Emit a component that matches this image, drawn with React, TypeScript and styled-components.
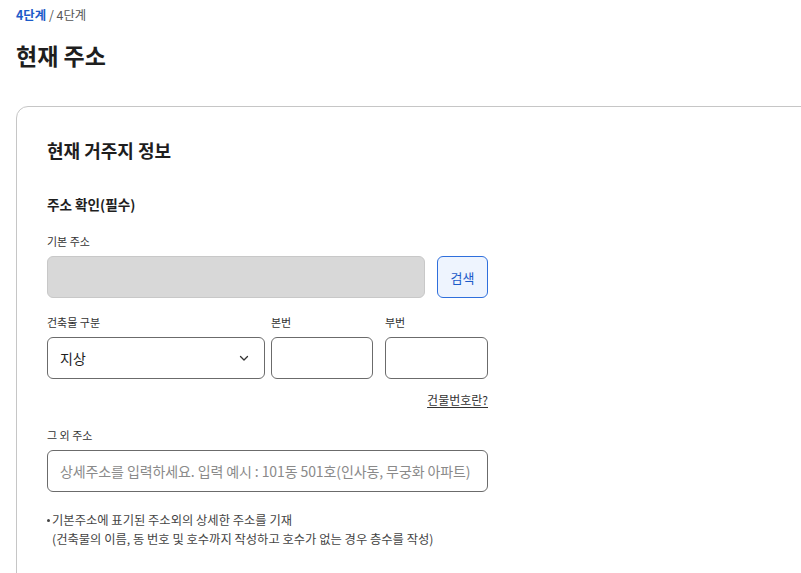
import styled, { createGlobalStyle } from "styled-components";

const GlobalStyle = createGlobalStyle`
	html, body {
		margin: 0;
		padding: 0;
		background: #fff;
		overflow: hidden;
	}
	body {
		font-family: "Noto Sans CJK KR", "Noto Sans", sans-serif;
		color: #1e1e1e;
	}
	* {
		box-sizing: border-box;
	}
`;

const Page = styled.div`
	padding: 6px 16px 0;
	width: 801px;
	overflow: hidden;
`;

const Breadcrumb = styled.nav`
	font-size: 12.4px;
	line-height: 18px;
	color: #555;
`;

const Current = styled.a`
	color: #1c5bc9;
	font-weight: 700;
	text-decoration: none;
`;

const PageTitle = styled.h1`
	margin: 15px 0 0;
	font-size: 23px;
	line-height: 32px;
	font-weight: 700;
	color: #1e1e1e;
`;

const Card = styled.section`
	margin-top: 35px;
	width: 830px;
	min-height: 480px;
	border: 1px solid #c6c6c6;
	border-radius: 12px;
	padding: 29px 30px 0;
`;

const Form = styled.div`
	width: 441px;
	display: flex;
	flex-direction: column;
`;

const CardTitle = styled.h2`
	margin: 0;
	font-size: 18px;
	line-height: 28px;
	font-weight: 700;
`;

const SectionTitle = styled.h3`
	margin: 30px 0 0;
	font-size: 13.6px;
	line-height: 20px;
	font-weight: 700;
`;

const Label = styled.label`
	display: block;
	font-size: 11px;
	line-height: 16px;
	color: #333;
	margin-bottom: 7px;
`;

const Field = styled.div<{ $width?: number; $inset?: number }>`
	display: flex;
	flex-direction: column;
	flex: ${(p) => (p.$width ? `0 0 ${p.$width}px` : "1 1 0")};
	padding-left: ${(p) => p.$inset ?? 0}px;
	min-width: 0;
`;

const Row = styled.div<{ $gap?: number }>`
	display: flex;
	align-items: flex-end;
	gap: ${(p) => p.$gap ?? 12}px;
`;

const Block = styled.div<{ $top: number }>`
	margin-top: ${(p) => p.$top}px;
`;

const Input = styled.input<{ $disabled?: boolean }>`
	width: 100%;
	height: 42px;
	border: 1px solid ${(p) => (p.$disabled ? "#c8c8c8" : "#6b6b6b")};
	border-radius: 6px;
	background: ${(p) => (p.$disabled ? "#d8d8d8" : "#fff")};
	padding: 0 12px;
	font-family: inherit;
	font-size: 14px;
	letter-spacing: -0.1px;
	color: #1e1e1e;
	outline: none;

	&::placeholder {
		color: #8a8a8a;
	}
`;

const SearchButton = styled.button`
	flex: 0 0 51px;
	height: 42px;
	border: 1px solid #2f6fdc;
	border-radius: 6px;
	background: #eef4fe;
	color: #1c5bc9;
	font-family: inherit;
	font-size: 13px;
	padding: 0;
	cursor: pointer;
`;

const Select = styled.div`
	height: 42px;
	border: 1px solid #6b6b6b;
	border-radius: 6px;
	display: flex;
	align-items: center;
	justify-content: space-between;
	padding: 0 14px 0 12px;
	font-size: 14px;
	color: #1e1e1e;
`;

const HelpLink = styled.a`
	align-self: flex-end;
	margin-top: 12px;
	font-size: 12px;
	line-height: 18px;
	color: #333;
	text-decoration: underline;
	text-underline-offset: 2px;
`;

const Notes = styled.ul`
	list-style: none;
	margin: 19px 0 0;
	padding: 0;
	font-size: 12.3px;
	line-height: 19px;
	color: #444;
`;

const Note = styled.li`
	position: relative;
	padding-left: 5px;

	&::before {
		content: "";
		position: absolute;
		left: 0;
		top: 8px;
		width: 3px;
		height: 3px;
		border-radius: 50%;
		background: #444;
	}
`;

function Chevron() {
	return (
		<svg width="12" height="12" viewBox="0 0 12 12" fill="none">
			<path d="M2.5 4.5 6 8l3.5-3.5" stroke="#333" strokeWidth="1.3" strokeLinecap="round" strokeLinejoin="round" />
		</svg>
	);
}

function App() {
	return (
		<>
			<GlobalStyle />
			<Page>
				<Breadcrumb>
					<Current href="#">4단계</Current> / 4단계
				</Breadcrumb>
				<PageTitle>현재 주소</PageTitle>

				<Card>
					<CardTitle>현재 거주지 정보</CardTitle>
					<Form>
						<SectionTitle>주소 확인(필수)</SectionTitle>

						<Block $top={19}>
							<Label>기본 주소</Label>
							<Row>
								<Field>
									<Input $disabled disabled />
								</Field>
								<SearchButton>검색</SearchButton>
							</Row>
						</Block>

						<Block $top={16}>
							<Row $gap={0}>
								<Field $width={218}>
									<Label>건축물 구분</Label>
									<Select>
										<span>지상</span>
										<Chevron />
									</Select>
								</Field>
								<Field $width={108} $inset={6}>
									<Label>본번</Label>
									<Input />
								</Field>
								<Field $width={115} $inset={12}>
									<Label>부번</Label>
									<Input />
								</Field>
							</Row>
						</Block>

						<HelpLink href="#">건물번호란?</HelpLink>

						<Block $top={18}>
							<Label>그 외 주소</Label>
							<Input placeholder="상세주소를 입력하세요. 입력 예시 : 101동 501호(인사동, 무궁화 아파트)" />
						</Block>

						<Notes>
							<Note>
								기본주소에 표기된 주소외의 상세한 주소를 기재
								<br />
								(건축물의 이름, 동 번호 및 호수까지 작성하고 호수가 없는 경우 층수를 작성)
							</Note>
						</Notes>
					</Form>
				</Card>
			</Page>
		</>
	);
}

export default App;
